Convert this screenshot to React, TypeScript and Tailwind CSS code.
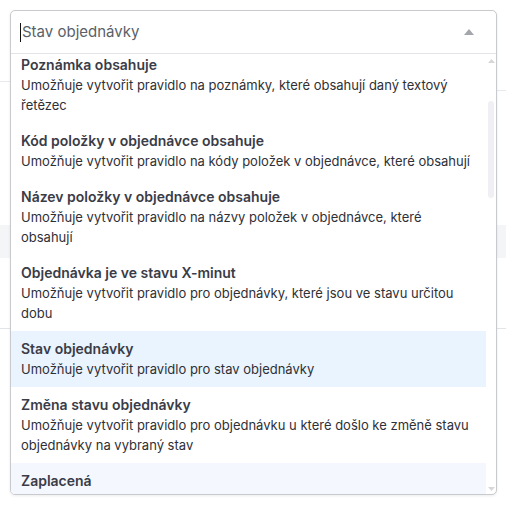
import { useState } from "react";

// Options shown in the open rule-type select
const options = [
  {
    title: "Poznámka obsahuje",
    desc: "Umožňuje vytvořit pravidlo na poznámky, které obsahují daný textový řetězec",
  },
  {
    title: "Kód položky v objednávce obsahuje",
    desc: "Umožňuje vytvořit pravidlo na kódy položek v objednávce, které obsahují",
  },
  {
    title: "Název položky v objednávce obsahuje",
    desc: "Umožňuje vytvořit pravidlo na názvy položek v objednávce, které obsahují",
  },
  {
    title: "Objednávka je ve stavu X-minut",
    desc: "Umožňuje vytvořit pravidlo pro objednávky, které jsou ve stavu určitou dobu",
  },
  {
    title: "Stav objednávky",
    desc: "Umožňuje vytvořit pravidlo pro stav objednávky",
  },
  {
    title: "Změna stavu objednávky",
    desc: "Umožňuje vytvořit pravidlo pro objednávku u které došlo ke změně stavu objednávky na vybraný stav",
  },
  {
    title: "Zaplacená",
    desc: "Umožňuje vytvořit pravidlo pro zaplacené objednávky",
  },
];

const App = () => {
  const [selected] = useState("Stav objednávky");
  const hovered = "Zaplacená";

  return (
    <div className="relative h-[508px] w-[506px] overflow-hidden bg-white font-['Inter','Liberation_Sans',sans-serif]">
      {/* Page behind the popup */}
      <div className="flex h-full">
        <div className="flex w-1/2 flex-col">
          <div className="h-[81px]" />
          <div className="border-t border-[#e8e9ec]" />
          <div className="h-[143px]" />
          <div className="h-[33px] bg-[#f4f5f7]" />
          <div className="h-[70px]" />
          <div className="border-t border-[#e3e4e8]" />
        </div>
        <div className="flex w-1/2 flex-col">
          <div className="h-[90px]" />
          <div className="border-t border-[#e8e9ec]" />
          <div className="h-[134px]" />
          <div className="h-[33px] bg-[#f4f5f7]" />
          <div className="h-[70px]" />
          <div className="border-t border-[#e3e4e8]" />
        </div>
      </div>

      {/* Select popup */}
      <div className="absolute left-[10px] top-[10px] flex h-[485px] w-[487px] flex-col overflow-hidden rounded-[5px] border border-[#c9cacd] bg-white shadow-[0_1px_3px_rgba(0,0,0,0.08)]">
        <div className="flex h-[43px] shrink-0 items-center border-b border-[#e3e4e7] pl-[9px] pr-[22px]">
          <span className="mr-[1px] h-[19px] w-px bg-[#111]" />
          <span className="text-[15px] text-[#5a5f69]">{selected}</span>
          <svg className="ml-auto" width="10" height="6" viewBox="0 0 10 6">
            <path d="M0 6 L5 0 L10 6 Z" fill="#a3a6ab" />
          </svg>
        </div>

        <div className="flex min-h-0 flex-1">
          <div className="min-w-0 flex-1 overflow-hidden">
            <div className="-mt-[7px]">
              {options.map((o) => (
                <div
                  key={o.title}
                  className={`px-[10px] py-[8px] leading-[20px] ${
                    o.title === selected
                      ? "bg-[#eaf4fe]"
                      : o.title === hovered
                      ? "bg-[#f4f8fe]"
                      : ""
                  }`}
                >
                  <div className="text-[14px] font-semibold text-[#3a3c47]">{o.title}</div>
                  <div className="text-[13px] text-[#2f3036]">{o.desc}</div>
                </div>
              ))}
            </div>
          </div>

          {/* Scrollbar */}
          <div className="flex w-[10px] shrink-0 flex-col items-center pt-[5px] pb-[3px]">
            <svg width="7" height="4" viewBox="0 0 7 4">
              <path d="M0 4 L3.5 0 L7 4 Z" fill="#d6d7da" />
            </svg>
            <div className="mt-[38px] h-[97px] w-[6px] rounded-full bg-[#f0f0f4]" />
            <svg className="mt-auto" width="7" height="4" viewBox="0 0 7 4">
              <path d="M0 0 L3.5 4 L7 0 Z" fill="#d6d7da" />
            </svg>
          </div>
        </div>
      </div>
    </div>
  );
};

export default App;
